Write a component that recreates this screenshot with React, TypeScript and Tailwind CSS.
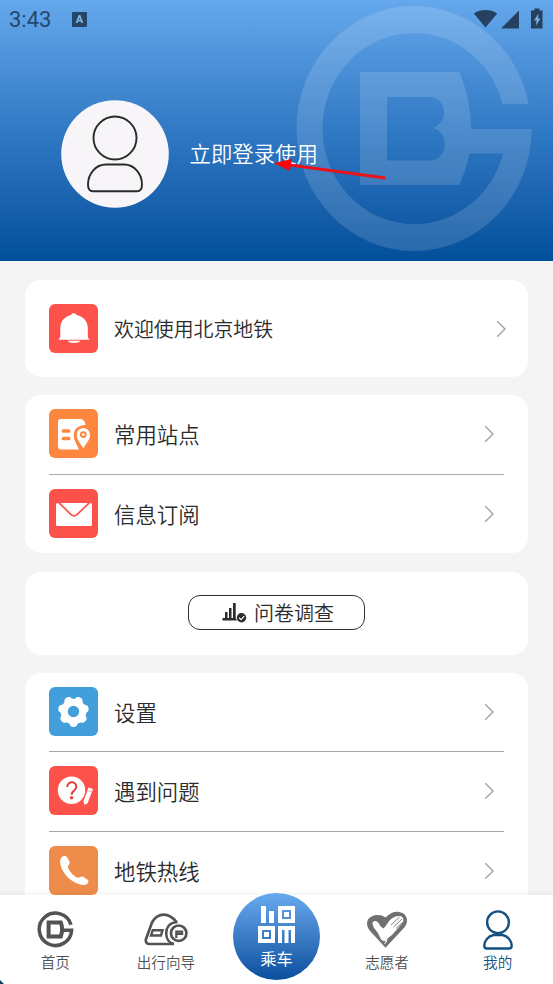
import React from 'react';

type TileProps = {
    className: string;
    children: React.ReactNode;
};

function Tile({ className, children }: TileProps) {
    return (
        <div className={`h-[49px] w-[49px] shrink-0 overflow-hidden rounded-[6px] ${className}`}>
            <svg viewBox="0 0 49 49" className="h-full w-full" fill="#fff">
                {children}
            </svg>
        </div>
    );
}

function Chevron() {
    return (
        <svg viewBox="0 0 10 17" className="h-[17px] w-[10px] shrink-0" fill="none" stroke="#a3a3a3" strokeWidth="1.4">
            <path d="M1.200 1.200 9 9 1.200 16.700" />
        </svg>
    );
}

type RowProps = {
    icon: React.ReactNode;
    label: string;
    divider?: boolean;
};

function Row({ icon, label, divider }: RowProps) {
    return (
        <div className={`mx-6 flex h-[79.5px] items-center border-b pb-px ${divider ? 'border-[#a3a9af]' : 'border-transparent'}`}>
            {icon}
            <span className="ml-4 flex-1 text-[21.4px] leading-none">{label}</span>
            <div className="mr-[10px] flex">
                <Chevron />
            </div>
        </div>
    );
}

/* Icons */
const bellIcon = (
    <Tile className="bg-[#fd524c]">
        <path d="M24.800 9.300c1.400 0 2.200.6 2.800 1.600 6.800 1.300 11 6.300 11.200 12.700v8.500c0 1.500.6 2.500 1.700 3.700h-31c1.200-1.200 1.800-2.200 1.800-3.700v-8.500c.2-6.400 4.300-11.400 10.800-12.700.5-1 1.300-1.600 2.700-1.600Z" />
        <path d="M18.500 36.800h13c-1.800 3-11.200 3-13 0Z" />
    </Tile>
);

const stationIcon = (
    <Tile className="bg-[#fd873e]">
        <path d="M12 10h19c3.500 0 5 2.500 5.500 6-7 0-11.800 4.300-11.800 10 0 5 3 9.500 5.300 14.500H12a3 3 0 0 1-3-3V13a3 3 0 0 1 3-3Z" />
        <g stroke="#fd873e" strokeWidth="3.700" strokeLinecap="round">
            <path d="M14.500 22h5.200M14.500 29.500h5.200" />
        </g>
        <path fillRule="evenodd" d="M34.300 39.300c-3-5-6.600-8.600-6.600-13.500a6.700 6.700 0 0 1 13.400 0c0 4.900-3.700 8.500-6.800 13.500Zm0-17.100a3.400 3.400 0 1 0 0 6.800 3.400 3.400 0 0 0 0-6.800Z" />
        <circle cx="34.300" cy="25.600" r="1.400" />
    </Tile>
);

const mailIcon = (
    <Tile className="bg-[#fd524c]">
        <rect x="7" y="14" width="36" height="23" rx="1.500" />
        <path d="M9 12.800 21.800 25.300q3.200 3 6.400 0L41.300 12.800" fill="none" stroke="#fd524c" strokeWidth="1.700" />
    </Tile>
);

const teeth = [0, 1, 2, 3, 4, 5, 6];

const gearIcon = (
    <Tile className="bg-[#439fdc]">
        <circle cx="24.500" cy="24.500" r="12.800" />
        {teeth.map((n) => (
            <path
                key={n}
                d="M17.500 35c2.500.4 3 1.500 3.500 3.300 1.200 2.200 5.800 2.200 7 0 .5-1.800 1-2.900 3.500-3.300Z"
                transform={`rotate(${(n * 360) / 7} 24.500 24.500)`}
            />
        ))}
        <circle cx="24.500" cy="24.500" r="5.700" fill="#439fdc" />
    </Tile>
);

const questionIcon = (
    <Tile className="bg-[#fd524c]">
        <circle cx="22.500" cy="24.300" r="13.700" />
        <path d="M18.300 21c.2-6.200 9-6.200 9 0 0 3.600-4.700 3.700-4.700 7.700" fill="none" stroke="#e63e38" strokeWidth="2" />
        <circle cx="22.600" cy="31.700" r="1.700" fill="#e63e38" />
        <path
            d="m39.500 21.500 4.500 1.600-5.300 14-3.300 2-.8-3.800Z"
            stroke="#fd524c"
            strokeWidth="2"
            paintOrder="stroke"
        />
        <path d="m38.800 24.500 4 1.500" stroke="#fd524c" strokeWidth=".5" />
    </Tile>
);

const phoneIcon = (
    <Tile className="bg-[#ee8d4b]">
        <path d="M14 10.300c1.700-.8 3.200-.4 4 1l2.600 4.200c.8 1.800-1.200 3.200-1.800 4.900.5 4 5.600 9.300 9.900 11.300 2 .1 3.300-1.800 5-1.200l5.300 3.600c1.600 1.800-.8 5.200-4.400 5-11.500-.8-22.300-12-23.500-22.500-.2-3 .9-5.200 2.900-6.300Z" />
    </Tile>
);

const bgLogo = (
    <svg viewBox="0 0 553 261" className="pointer-events-none absolute inset-0 h-[261px] w-[553px]">
        <path
            fill="#fff"
            fillOpacity=".14"
            fillRule="evenodd"
            d="M528.700 104A117.500 122.500 0 0 0 414 6A117.500 122.500 0 0 0 296.500 128.500A117.500 122.500 0 0 0 414 251A117.700 122.500 0 0 0 531.700 129H471.300Q470.500 98 459.300 72H360V185H459.300Q466 170 469.500 153.500H503A91.500 95.500 0 0 1 414 224A91.500 95.500 0 0 1 322.500 128.500A91.500 95.500 0 0 1 414 33A91.500 95.500 0 0 1 502.500 104ZM387 97H429C448 97 449 124 432 128C450 131 449 160.500 429 160.500H387Z"
        />
    </svg>
);

const homeIcon = (
    <svg viewBox="0 0 37 37" className="h-[37px] w-[37px]" fill="none" stroke="#535353">
        <path d="M34 13.800A16.200 16.200 0 1 0 34.600 19.300H25" strokeWidth="3.500" />
        <path d="M11.600 11.500H23.800Q26.500 18 23.800 25.500H11.600Z" strokeWidth="4" />
    </svg>
);

const guideIcon = (
    <svg viewBox="0 0 44 34" className="h-[34px] w-[44px]" fill="none" stroke="#535353">
        <path d="M30 31H5.500Q1.500 31 1.800 26.500L8 9.500C11 4 15 1.700 20 1.700 25 1.700 28.500 4.200 32.500 9" strokeWidth="2.700" />
        <path d="M8.800 17.200h9.700l-1.500 5.300H7Z" strokeWidth="2.400" />
        <path d="M33.500 9C25 9.500 22.200 15 22.200 20.200S25 30 30 31" strokeWidth="2.600" />
        <circle cx="34.700" cy="20.200" r="7.700" strokeWidth="2.700" />
        <path d="M32.300 25v-6.500h5.800v2.400h-5" strokeWidth="2.200" />
    </svg>
);

const heartIcon = (
    <svg viewBox="0 0 42 37" className="h-[37px] w-[42px]">
        <path
            fill="#707070"
            d="M19.500 6.500C26-.200 32-.400 37 2.200c4.800 3.300 5.300 9.300 1.500 14L19.500 36.800 4.500 20.500C-.800 14.500.300 8 5.500 5.500c5-2.200 10-2 14 1Z"
        />
        <path
            fill="#fff"
            d="M6.500 11.500c2-2.500 4.500-1.800 6 .5 1.500 2.700 3 4.500 5 5.500 2-2 4-5.500 6.500-8.500C27 6 31 4.500 34.500 5c2.500.8 3.700 3.500 2.500 6.500L26 24c-2.500 1.500-4 3-5.500 5.500-3 .5-5.500-1.500-7-4C12 20 6 17 6.500 11.500Z"
        />
        <path d="m25 14 8.500-8M27.500 16l8.500-8M30 17.500l7.500-6.800" stroke="#707070" strokeWidth=".9" />
        <path d="M14.500 27.500c2 2.500 4.500 3 6.500 2l-2.500 3.500" stroke="#fff" strokeWidth="1" fill="none" />
    </svg>
);

const mineIcon = (
    <svg viewBox="0 0 30 40" className="h-[40px] w-[30px]" fill="none" stroke="#165083" strokeWidth="2.400">
        <circle cx="15" cy="12.300" r="10.900" />
        <path d="M10.500 25h9C25 26 28.700 31 28.700 35.800q0 2.700-2.700 2.700H4q-2.700 0-2.700-2.700C1.300 31 5 26 10.500 25Z" />
    </svg>
);

const qrIcon = (
    <svg viewBox="0 0 37 37" className="h-[37px] w-[37px]" fill="#fff">
        <path d="M3 0h5v17H3ZM11 5h5v12h-5Z" />
        <path fillRule="evenodd" d="M20 0h17v17H20Zm4 4v9h9V4ZM0 20h17v17H0Zm4 4v9h9v-9Z" />
        <path d="M26 6h5v5h-5ZM6 26h5v5H6ZM20 20h17v17h-4V24h-2.500v13h-4V24H24v13h-4Z" />
    </svg>
);

type TabProps = {
    icon: React.ReactNode;
    label: string;
    active?: boolean;
};

function Tab({ icon, label, active }: TabProps) {
    return (
        <div className="flex flex-1 flex-col items-center">
            <div className="flex h-[58px] items-center justify-center pt-[11px]">{icon}</div>
            <span className={`text-[14.6px] leading-[18px] ${active ? 'text-[#165083]' : 'text-[#505050]'}`}>{label}</span>
        </div>
    );
}

export default function App() {
    return (
        <div className="flex h-[984px] w-[553px] flex-col overflow-hidden bg-[#f4f4f4] font-['Noto_Sans_CJK_SC',sans-serif] font-[350] text-[#2b2b2b]">

            {/* Header */}
            <header className="relative h-[261px] shrink-0 bg-linear-to-b from-[#65a8ec] via-[#3079c4] to-[#014f9b]">
                {bgLogo}

                {/* Status bar */}
                <div className="flex h-[38px] items-center pl-[9px] text-[#25476d]">
                    <span className="w-[63px] pt-px font-[Roboto,sans-serif] text-[22px] font-normal leading-none">3:43</span>
                    <div className="flex h-[15px] w-[15px] items-center justify-center rounded-[1px] bg-[#234568] font-[Roboto,sans-serif] text-[11px] font-bold leading-none text-[#8ab9ea]">
                        A
                    </div>
                    <svg viewBox="0 0 72 22" className="mb-px ml-auto mr-[8px] h-[22px] w-[72px]" fill="#25415f">
                        <path d="M.8 5.500C7 .900 18 .900 24.200 5.500L12.500 19.500Z" />
                        <path d="M46 2.500v18H28Z" />
                        <path d="M61.500 2.500V.500h5v2h3v18h-11.500v-18Z" />
                        <path d="m65.500 5.500-4.500 7h2.500l-.5 5 4.500-7H65Z" fill="#7fb0e4" />
                    </svg>
                </div>

                <div className="mt-[62px] flex items-center pl-[61px]">
                    <svg viewBox="0 0 108 108" className="h-[108px] w-[108px]" fill="none" stroke="#2a292b" strokeWidth="1.900">
                        <circle cx="54" cy="54" r="53.800" fill="#f7f5f7" stroke="none" />
                        <circle cx="54" cy="38" r="21.500" />
                        <path d="M45 64.500h18c10.500 0 18 9.500 18 20q0 6.800-5 6.800H32q-5 0-5-6.800c0-10.500 7.500-20 18-20Z" />
                    </svg>
                    <span className="ml-[20.500px] pb-0.5 text-[21.400px] leading-none text-white">立即登录使用</span>
                </div>

                <svg viewBox="0 0 112 24" className="absolute left-[274px] top-[156px] h-[24px] w-[112px]">
                    <path d="M12 8.500 111.500 22" stroke="#ed1118" strokeWidth="2.800" />
                    <path d="M0 7 18 3 15.500 15Z" fill="#fb0509" />
                </svg>
            </header>

            <main className="flex min-h-0 flex-1 flex-col overflow-hidden px-[25px] pt-[19px]">
                <div className="flex h-[97px] shrink-0 items-center rounded-[16px] bg-white px-6 pb-px">
                    {bellIcon}
                    <span className="ml-4 flex-1 pt-px text-[19.9px] leading-none">欢迎使用北京地铁</span>
                    <div className="-mr-[2px] flex">
                        <Chevron />
                    </div>
                </div>

                <div className="mt-[18px] h-[158px] shrink-0 rounded-[16px] bg-white">
                    <Row icon={stationIcon} label="常用站点" divider />
                    <Row icon={mailIcon} label="信息订阅" />
                </div>

                <div className="mt-[19px] flex h-[83px] shrink-0 items-center justify-center rounded-[16px] bg-white pb-0.5">
                    <button className="flex h-[35px] w-[177px] items-center rounded-[12px] border border-[#303030] pl-[33px]">
                        <svg viewBox="0 0 25 21" className="h-[21px] w-[25px]" fill="#2c2c2c">
                            <path d="M3 10h2.500v6H7V6h2.500v10H11V1h2.700v15L15 18.500H.500V16H3Z" />
                            <circle cx="19.500" cy="15.800" r="4.700" />
                            <path d="m17 15.700 2 2 3.300-3.500" fill="none" stroke="#fff" strokeWidth="1.200" />
                        </svg>
                        <span className="ml-[7px] pt-px text-[20px] leading-none">问卷调查</span>
                    </button>
                </div>

                <div className="mt-[17.6px] shrink-0 rounded-t-[16px] bg-white">
                    <Row icon={gearIcon} label="设置" divider />
                    <Row icon={questionIcon} label="遇到问题" divider />
                    <Row icon={phoneIcon} label="地铁热线" />
                </div>
            </main>

            {/* Bottom tabs */}
            <nav className="relative flex h-[89px] shrink-0 bg-white shadow-[0_-1px_6px_rgba(0,0,0,0.06)]">
                <Tab icon={homeIcon} label="首页" />
                <Tab icon={guideIcon} label="出行向导" />
                <div className="flex flex-1 justify-center">
                    <div className="-mt-[2px] flex h-[87px] w-[87px] flex-col items-center rounded-full bg-linear-to-b from-[#68aaef] to-[#084f9e] pt-[13px]">
                        {qrIcon}
                        <span className="mt-[7px] text-[16.300px] font-normal leading-none text-white">乘车</span>
                    </div>
                </div>
                <Tab icon={heartIcon} label="志愿者" />
                <Tab icon={mineIcon} label="我的" active />
                <svg viewBox="0 0 4 4" className="absolute bottom-0 left-0 h-[4px] w-[4px]">
                    <path d="M0 0 4 4H0Z" fill="#0b4a5c" />
                </svg>
            </nav>
        </div>
    );
}
